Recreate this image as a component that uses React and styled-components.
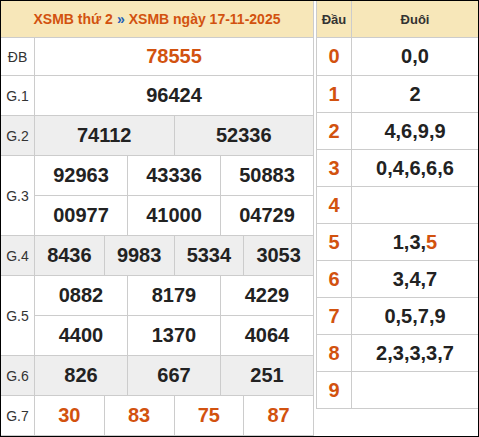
import React from 'react';
import styled, { createGlobalStyle } from 'styled-components';

const COLORS = {
  orange: '#d2520f',
  text: '#222222',
  label: '#333333',
  border: '#cccccc',
  header: '#f7e7b9',
  stripe: '#eeeeee',
  blue: '#1d5fb8',
};

const GlobalStyle = createGlobalStyle`
  html, body {
    margin: 0;
    padding: 0;
    background: #ffffff;
    font-family: "Liberation Sans", Arial, sans-serif;
  }
`;

const Frame = styled.div`
  box-sizing: border-box;
  width: 479px;
  height: 437px;
  border: 1px solid #000;
  display: flex;
  align-items: flex-start;
  gap: 2px;
  background: #fff;
  overflow: hidden;
`;

const ResultTable = styled.div`
  box-sizing: border-box;
  width: 313px;
  border-right: 1px solid ${COLORS.border};
  display: flex;
  flex-direction: column;
`;

const TableHeader = styled.div`
  box-sizing: border-box;
  height: 37px;
  background: ${COLORS.header};
  border-bottom: 1px solid ${COLORS.border};
  display: flex;
  align-items: center;
  justify-content: center;
  font-weight: bold;
  font-size: 14px;
  color: ${COLORS.orange};
`;

const Arrow = styled.span`
  color: ${COLORS.blue};
  margin: 0 4px;
`;

const Row = styled.div`
  box-sizing: border-box;
  height: ${p => p.$height || 40}px;
  display: flex;
  border-bottom: 1px solid ${COLORS.border};
  background: ${p => (p.$striped ? COLORS.stripe : '#fff')};
`;

const Label = styled.div`
  box-sizing: border-box;
  width: 34px;
  flex-shrink: 0;
  border-right: 1px solid ${COLORS.border};
  display: flex;
  align-items: center;
  justify-content: center;
  font-size: 14px;
  color: ${COLORS.label};
`;

const Lines = styled.div`
  flex: 1;
  display: flex;
  flex-direction: column;
`;

const Line = styled.div`
  flex: 1;
  display: flex;
  & + & {
    border-top: 1px solid ${COLORS.border};
  }
`;

const Number = styled.div`
  box-sizing: border-box;
  flex: 1 1 0;
  display: flex;
  align-items: center;
  justify-content: center;
  font-weight: bold;
  font-size: 20px;
  color: ${p => (p.$hot ? COLORS.orange : COLORS.text)};
  & + & {
    border-left: 1px solid ${COLORS.border};
  }
`;

const LotoTable = styled.div`
  box-sizing: border-box;
  flex: 1;
  border-left: 1px solid ${COLORS.border};
  display: flex;
  flex-direction: column;
`;

const LotoRow = styled.div`
  box-sizing: border-box;
  height: ${p => p.$height || 37}px;
  display: flex;
  border-bottom: 1px solid ${COLORS.border};
  background: ${p => (p.$head ? COLORS.header : '#fff')};
  font-size: ${p => (p.$head ? 13 : 20)}px;
  font-weight: bold;
`;

const Head = styled.div`
  box-sizing: border-box;
  width: 35px;
  flex-shrink: 0;
  border-right: 1px solid ${COLORS.border};
  display: flex;
  align-items: center;
  justify-content: center;
  color: ${p => (p.$head ? COLORS.label : COLORS.orange)};
`;

const Tail = styled.div`
  flex: 1;
  display: flex;
  align-items: center;
  justify-content: center;
  color: ${p => (p.$head ? COLORS.label : COLORS.text)};
`;

const Hot = styled.span`
  color: ${COLORS.orange};
`;

const PRIZES = [
  { label: 'ĐB', height: 38, lines: [['78555']], hot: true },
  { label: 'G.1', lines: [['96424']] },
  { label: 'G.2', striped: true, lines: [['74112', '52336']] },
  { label: 'G.3', height: 80, lines: [['92963', '43336', '50883'], ['00977', '41000', '04729']] },
  { label: 'G.4', striped: true, lines: [['8436', '9983', '5334', '3053']] },
  { label: 'G.5', height: 80, lines: [['0882', '8179', '4229'], ['4400', '1370', '4064']] },
  { label: 'G.6', striped: true, lines: [['826', '667', '251']] },
  { label: 'G.7', lines: [['30', '83', '75', '87']], hot: true },
];

const LOTO = [
  '0,0',
  '2',
  '4,6,9,9',
  '0,4,6,6,6',
  '',
  <>1,3,<Hot>5</Hot></>,
  '3,4,7',
  '0,5,7,9',
  '2,3,3,3,7',
  '',
];

export default function App() {
  return (
    <>
      <GlobalStyle />
      <Frame>
        <ResultTable>
          <TableHeader>
            XSMB thứ 2<Arrow>»</Arrow>XSMB ngày 17-11-2025
          </TableHeader>
          {PRIZES.map(prize => (
            <Row key={prize.label} $height={prize.height} $striped={prize.striped}>
              <Label>{prize.label}</Label>
              <Lines>
                {prize.lines.map((line, i) => (
                  <Line key={i}>
                    {line.map(num => (
                      <Number key={num} $hot={prize.hot}>{num}</Number>
                    ))}
                  </Line>
                ))}
              </Lines>
            </Row>
          ))}
        </ResultTable>
        <LotoTable>
          <LotoRow $head>
            <Head $head>Đầu</Head>
            <Tail $head>Đuôi</Tail>
          </LotoRow>
          {LOTO.map((tails, i) => (
            <LotoRow key={i} $height={i === 0 ? 38 : 37}>
              <Head>{i}</Head>
              <Tail>{tails}</Tail>
            </LotoRow>
          ))}
        </LotoTable>
      </Frame>
    </>
  );
}
